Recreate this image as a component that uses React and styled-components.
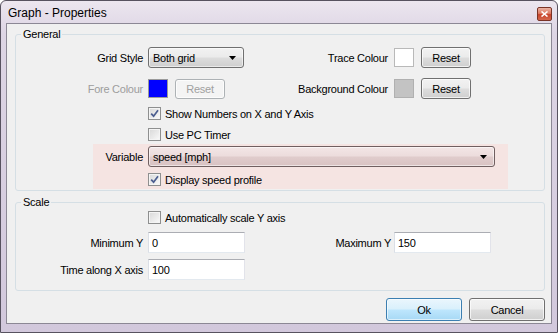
import React from 'react';
import styled, { createGlobalStyle } from 'styled-components';

const GlobalStyle = createGlobalStyle`
  html, body {
    margin: 0;
    padding: 0;
    background: #ffffff;
  }
  body {
    font-family: "Liberation Sans", Arial, sans-serif;
    font-size: 11px;
    letter-spacing: -0.25px;
    color: #000;
  }
`;

const FONT = `11px "Liberation Sans", Arial, sans-serif`;

const Window = styled.div`
  box-sizing: border-box;
  width: 558px;
  height: 333px;
  border: 1px solid #57525f;
  border-radius: 6px 6px 0 0;
  background: linear-gradient(180deg, #ece6ef 0%, #ddd5e4 10%, #d2c8dc 100%);
  padding: 0 5px 8px;
  display: flex;
  flex-direction: column;
`;

const TitleBar = styled.div`
  box-sizing: border-box;
  height: 22px;
  padding: 2px 0 0 2px;
  display: flex;
  align-items: center;
  justify-content: space-between;
`;

const Title = styled.span`
  font-size: 12px;
  letter-spacing: 0;
  color: #000;
`;

const CloseButton = styled.div`
  box-sizing: border-box;
  width: 15px;
  height: 14px;
  margin-top: 2px;
  border: 1px solid #7a3426;
  border-radius: 2px;
  background: linear-gradient(180deg, #eab3a4 0%, #dd7a62 45%, #c8432a 55%, #d4674c 100%);
  display: flex;
  align-items: center;
  justify-content: center;
`;

const Client = styled.div`
  flex: 1;
  border: 1px solid #8c8895;
  background: #f0f0f0;
  padding: 4px 6px 0 8px;
  display: flex;
  flex-direction: column;
`;

const Group = styled.fieldset`
  margin: ${({ $top }) => $top}px 0 0;
  padding: ${({ $pt }) => $pt}px 0 ${({ $pb }) => $pb}px;
  border: 1px solid #d5dfe5;
  border-radius: 3px;
  min-width: 0;
`;

const Legend = styled.legend`
  margin-left: 5px;
  padding: 0 2px;
  line-height: 13px;
  font-size: 11px;
`;

const Row = styled.div`
  display: flex;
  align-items: center;
  height: ${({ $h }) => $h || 21}px;
  margin-top: ${({ $mt }) => $mt || 0}px;
  margin-left: ${({ $ml }) => $ml || 0}px;
`;

const Cell = styled.div`
  display: flex;
  align-items: center;
  width: ${({ $w }) => $w}px;
  flex-shrink: 0;
`;

const Label = styled.span`
  width: ${({ $w }) => $w}px;
  flex-shrink: 0;
  text-align: right;
  margin-right: ${({ $gap }) => $gap}px;
  color: ${({ $disabled }) => ($disabled ? '#9d9d9d' : '#000')};
  white-space: nowrap;
`;

const Combo = styled.div`
  box-sizing: border-box;
  width: ${({ $w }) => $w}px;
  height: 21px;
  padding: 0 7px 0 4px;
  border: 1px solid ${({ $pink }) => ($pink ? '#705f60' : '#707070')};
  border-radius: 3px;
  background: ${({ $pink }) =>
    $pink
      ? 'linear-gradient(180deg, #f3e6e6 0%, #ecdcdc 48%, #e0cccc 52%, #d8c2c2 100%)'
      : 'linear-gradient(180deg, #f2f2f2 0%, #ebebeb 48%, #dddddd 52%, #cfcfcf 100%)'};
  box-shadow: inset 0 0 0 1px rgba(255, 255, 255, 0.55);
  display: flex;
  align-items: center;
  justify-content: space-between;
`;

const Swatch = styled.div`
  box-sizing: border-box;
  width: 20px;
  height: 19px;
  border: 1px solid ${({ $border }) => $border};
  background: ${({ $color }) => $color};
  margin-right: 7px;
`;

const Button = styled.button`
  box-sizing: border-box;
  width: ${({ $w }) => $w}px;
  height: ${({ $h }) => $h}px;
  padding: 0;
  font: ${FONT};
  letter-spacing: -0.25px;
  color: #000;
  border: 1px solid #707070;
  border-radius: 3px;
  background: linear-gradient(180deg, #f2f2f2 0%, #ebebeb 48%, #dddddd 52%, #cfcfcf 100%);
  box-shadow: inset 0 0 0 1px rgba(255, 255, 255, 0.7);

  &:disabled {
    color: #a0a0a0;
    border-color: #adb2b5;
    background: #f4f4f4;
  }
`;

const DefaultButton = styled(Button)`
  border-color: #3c7fb1;
  background: linear-gradient(180deg, #eaf6fd 0%, #d9f0fc 48%, #bee6fd 52%, #a7d9f5 100%);
  box-shadow: inset 0 0 0 1px rgba(255, 255, 255, 0.6);
`;

const Box = styled.span`
  box-sizing: border-box;
  width: 13px;
  height: 13px;
  flex-shrink: 0;
  border: 1px solid #8e8f8f;
  background: linear-gradient(135deg, #d8d8d8 0%, #ececec 60%, #fbfbfb 100%);
  box-shadow: inset 0 0 0 1px #f4f4f4;
  display: flex;
  align-items: center;
  justify-content: center;
  margin-right: 4px;
`;

const Highlight = styled.div`
  width: 415px;
  margin: 3px 0 0 77px;
  padding: 2px 0 3px;
  background: #f5e4e2;
`;

const TextInput = styled.input`
  box-sizing: border-box;
  width: 97px;
  height: 21px;
  padding: 0 3px;
  font: ${FONT};
  letter-spacing: -0.25px;
  color: #000;
  background: #fff;
  border: 1px solid;
  border-color: #abadb3 #e2e3ea #e3e9ef #dbdfe6;
  outline: none;
`;

const Footer = styled.div`
  display: flex;
  justify-content: flex-end;
  gap: 7px;
  margin-top: 7px;
`;

const Arrow = () => (
  <svg width="7" height="4" viewBox="0 0 7 4">
    <path d="M0 0 H7 L3.5 4 Z" fill="#000" />
  </svg>
);

const Check = ({ checked, children }) => (
  <>
    <Box>
      {checked && (
        <svg width="9" height="9" viewBox="0 0 9 9">
          <path d="M1.2 4.6 L3.6 7.2 L8 1.2" stroke="#4b5d8f" strokeWidth="1.7" fill="none" />
        </svg>
      )}
    </Box>
    <span>{children}</span>
  </>
);

const App = () => (
  <>
    <GlobalStyle />
    <Window>
      <TitleBar>
        <Title>Graph - Properties</Title>
        <CloseButton>
          <svg width="7" height="6" viewBox="0 0 7 6">
            <path d="M0.5 0.5 L6.5 5.5 M6.5 0.5 L0.5 5.5" stroke="#fff" strokeWidth="1.6" />
          </svg>
        </CloseButton>
      </TitleBar>
      <Client>
        <Group $top={0} $pt={6} $pb={1}>
          <Legend>General</Legend>
          <Row>
            <Cell $w={228}>
              <Label $w={127} $gap={5}>Grid Style</Label>
              <Combo $w={97}>
                <span>Both grid</span>
                <Arrow />
              </Combo>
            </Cell>
            <Label $w={144} $gap={6}>Trace Colour</Label>
            <Swatch $color="#ffffff" $border="#b9b9b9" />
            <Button $w={50} $h={21}>Reset</Button>
          </Row>
          <Row $mt={10}>
            <Cell $w={228}>
              <Label $w={127} $gap={5} $disabled>Fore Colour</Label>
              <Swatch $color="#0000ff" $border="#9a9a9a" />
              <Button $w={50} $h={20} disabled>Reset</Button>
            </Cell>
            <Label $w={144} $gap={6}>Background Colour</Label>
            <Swatch $color="#c3c3c3" $border="#b0b0b0" />
            <Button $w={50} $h={21}>Reset</Button>
          </Row>
          <Row $h={13} $mt={8} $ml={132}>
            <Check checked>Show Numbers on X and Y Axis</Check>
          </Row>
          <Row $h={13} $mt={8} $ml={132}>
            <Check>Use PC Timer</Check>
          </Row>
          <Highlight>
            <Row>
              <Label $w={50} $gap={5}>Variable</Label>
              <Combo $w={347} $pink>
                <span>speed [mph]</span>
                <Arrow />
              </Combo>
            </Row>
            <Row $h={13} $mt={6} $ml={55}>
              <Check checked>Display speed profile</Check>
            </Row>
          </Highlight>
        </Group>

        <Group $top={5} $pt={2} $pb={10}>
          <Legend>Scale</Legend>
          <Row $h={13} $ml={132}>
            <Check>Automatically scale Y axis</Check>
          </Row>
          <Row $mt={8}>
            <Cell $w={229}>
              <Label $w={127} $gap={5}>Minimum Y</Label>
              <TextInput value="0" readOnly />
            </Cell>
            <Label $w={146} $gap={3}>Maximum Y</Label>
            <TextInput value="150" readOnly />
          </Row>
          <Row $mt={6}>
            <Label $w={127} $gap={5}>Time along X axis</Label>
            <TextInput value="100" readOnly />
          </Row>
        </Group>

        <Footer>
          <DefaultButton $w={76} $h={23}>Ok</DefaultButton>
          <Button $w={76} $h={23}>Cancel</Button>
        </Footer>
      </Client>
    </Window>
  </>
);

export default App;
